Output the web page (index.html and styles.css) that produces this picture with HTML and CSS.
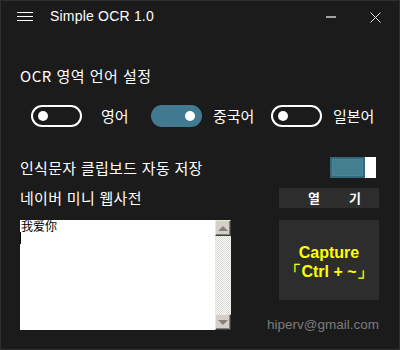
FILE: index.html
```html
<!DOCTYPE html>
<html lang="ko">

<head>
  <meta charset="UTF-8">
  <meta name="viewport" content="width=device-width, initial-scale=1.0">
  <title>Simple OCR 1.0</title>
  <link rel="stylesheet" href="styles.css">
</head>

<body>
  <div class="window">
    <div class="titlebar">
      <svg class="menu-icon" width="16" height="10" viewBox="0 0 16 10">
        <path d="M0 0.5H16M0 4.5H16M0 8.5H16" stroke="#fff" stroke-width="1" />
      </svg>
      <span class="title">Simple OCR 1.0</span>
      <svg class="btn-min" width="10" height="2" viewBox="0 0 10 2">
        <path d="M0 1H10" stroke="#fff" stroke-width="1.2" />
      </svg>
      <svg class="btn-close" width="11" height="11" viewBox="0 0 11 11">
        <path d="M0.5 0.5L10.5 10.5M10.5 0.5L0.5 10.5" stroke="#ddd" stroke-width="1" />
      </svg>
    </div>

    <div class="content">
      <h1 class="heading">OCR 영역 언어 설정</h1>

      <div class="lang-row">
        <div class="lang">
          <span class="toggle"><span class="knob"></span></span>
          <span class="lang-label first">영어</span>
        </div>
        <div class="lang">
          <span class="toggle on"><span class="knob"></span></span>
          <span class="lang-label">중국어</span>
        </div>
        <div class="lang">
          <span class="toggle"><span class="knob"></span></span>
          <span class="lang-label">일본어</span>
        </div>
      </div>

      <div class="option-row">
        <span class="option-text">인식문자 클립보드 자동 저장</span>
        <span class="switch"><span class="switch-fill"></span><span class="switch-thumb"></span></span>
      </div>

      <div class="option-row dict">
        <span class="option-text">네이버 미니 웹사전</span>
        <button class="open-btn"><span>열</span><span>기</span></button>
      </div>

      <div class="bottom">
        <div class="textbox">
          <div class="text-area">
            <div class="result">我爱你</div>
            <div class="caret"></div>
          </div>
          <div class="scrollbar">
            <div class="sb-btn"><span class="arrow up"></span></div>
            <div class="sb-track"></div>
            <div class="sb-btn"><span class="arrow down"></span></div>
          </div>
        </div>
        <div class="side">
          <button class="capture-btn">Capture<br>「Ctrl + ~」</button>
          <div class="email">hiperv@gmail.com</div>
        </div>
      </div>
    </div>
  </div>
</body>

</html>
```

FILE: styles.css
```css
* {
  margin: 0;
  padding: 0;
  box-sizing: border-box;
}

:root {
  --background: #1b1b1b;
  --border: #2f2f2f;
  --panel: #2d2d2d;
  --teal: #427b91;
  --white: #ffffff;
  --grey-text: #7b7b7b;

  font-family: "Noto Sans CJK KR", "Liberation Sans", sans-serif;
}

body {
  background: var(--background);
}

.window {
  width: 400px;
  height: 350px;
  background: var(--background);
  border: 1px solid var(--border);
  color: var(--white);
  overflow: hidden;
}

/* title bar */
.titlebar {
  display: flex;
  align-items: center;
  height: 32px;
}

.menu-icon {
  margin-left: 16px;
  margin-top: -1px;
}

.title {
  margin-left: 17px;
  font-family: "Liberation Sans", sans-serif;
  font-size: 14px;
  letter-spacing: 0.2px;
  margin-top: -2px;
}

.btn-min {
  margin-left: auto;
}

.btn-close {
  margin-left: 34px;
  margin-right: 18px;
}

/* content */
.content {
  padding-left: 19px;
}

.heading {
  font-size: 15px;
  font-weight: 400;
  line-height: 20px;
  letter-spacing: 0.5px;
  margin-top: 33px;
}

.lang-row {
  display: flex;
  margin-top: 19px;
  padding-left: 11px;
}

.lang {
  display: flex;
  align-items: center;
  width: 120px;
}

.toggle {
  position: relative;
  width: 51px;
  height: 22px;
  border: 2px solid var(--white);
  border-radius: 11px;
}

.toggle .knob {
  position: absolute;
  top: 4px;
  left: 5px;
  width: 10px;
  height: 10px;
  border-radius: 50%;
  background: var(--white);
}

.toggle.on {
  background: var(--teal);
  border-color: var(--teal);
}

.toggle.on .knob {
  left: auto;
  right: 5px;
}

.lang-label {
  font-size: 15px;
  line-height: 20px;
  margin-left: 11px;
}

.lang-label.first {
  margin-left: 19px;
}

.option-row {
  display: flex;
  align-items: center;
  justify-content: space-between;
  margin-top: 30px;
  width: 356px;
  height: 21px;
}

.option-row.dict {
  margin-top: 10px;
  width: 359px;
  height: 20px;
}

.option-text {
  font-size: 15px;
  line-height: 20px;
  letter-spacing: 0.3px;
}

.switch {
  display: flex;
  width: 46px;
  height: 21px;
}

.switch-fill {
  flex: 1;
  border: 2px solid #34687a;
  box-shadow: inset 0 0 0 1px #4a8599;
  background: #42808f;
}

.switch-thumb {
  width: 11px;
  background: var(--white);
}

.open-btn {
  display: flex;
  justify-content: center;
  gap: 29px;
  width: 100px;
  height: 20px;
  border: none;
  background: var(--panel);
  color: var(--white);
  font-family: "Noto Sans CJK KR", sans-serif;
  font-weight: 700;
  font-size: 13px;
  line-height: 20px;
  padding-left: 11px;
}

/* bottom area */
.bottom {
  display: flex;
  margin-top: 12px;
}

.textbox {
  display: flex;
  width: 211px;
  height: 110px;
  background: var(--white);
}

.text-area {
  flex: 1;
  color: #000;
}

.result {
  font-family: "Noto Sans CJK SC", sans-serif;
  font-size: 12px;
  line-height: 12px;
  height: 12px;
  padding-left: 1px;
}

.caret {
  width: 1px;
  height: 12px;
  background: #000;
}

.scrollbar {
  display: flex;
  flex-direction: column;
  width: 16px;
}

.sb-btn {
  display: flex;
  align-items: center;
  justify-content: center;
  height: 16px;
  background: #d4d0c8;
  border: 1px solid;
  border-color: #e8e6e0 #404040 #404040 #e8e6e0;
  box-shadow: inset -1px -1px 0 #808080;
}

.sb-track {
  flex: 1;
  background: repeating-conic-gradient(#d8d6d0 0 25%, #fff 0 50%) 0 0 / 2px 2px;
}

.arrow {
  width: 0;
  height: 0;
  border-left: 5px solid transparent;
  border-right: 5px solid transparent;
}

.arrow.up {
  border-bottom: 5px solid #808080;
}

.arrow.down {
  border-top: 5px solid #808080;
}

.side {
  display: flex;
  flex-direction: column;
  align-items: flex-end;
  margin-left: 48px;
  width: 100px;
}

.capture-btn {
  width: 100px;
  height: 80px;
  border: none;
  background: var(--panel);
  color: #ffff00;
  font-family: "Liberation Sans", sans-serif;
  font-weight: 700;
  font-size: 16px;
  line-height: 19px;
  padding-top: 3px;
}

.email {
  margin-top: 18px;
  font-family: "Liberation Sans", sans-serif;
  font-size: 13.5px;
  line-height: 14px;
  color: var(--grey-text);
  white-space: nowrap;
}
```
